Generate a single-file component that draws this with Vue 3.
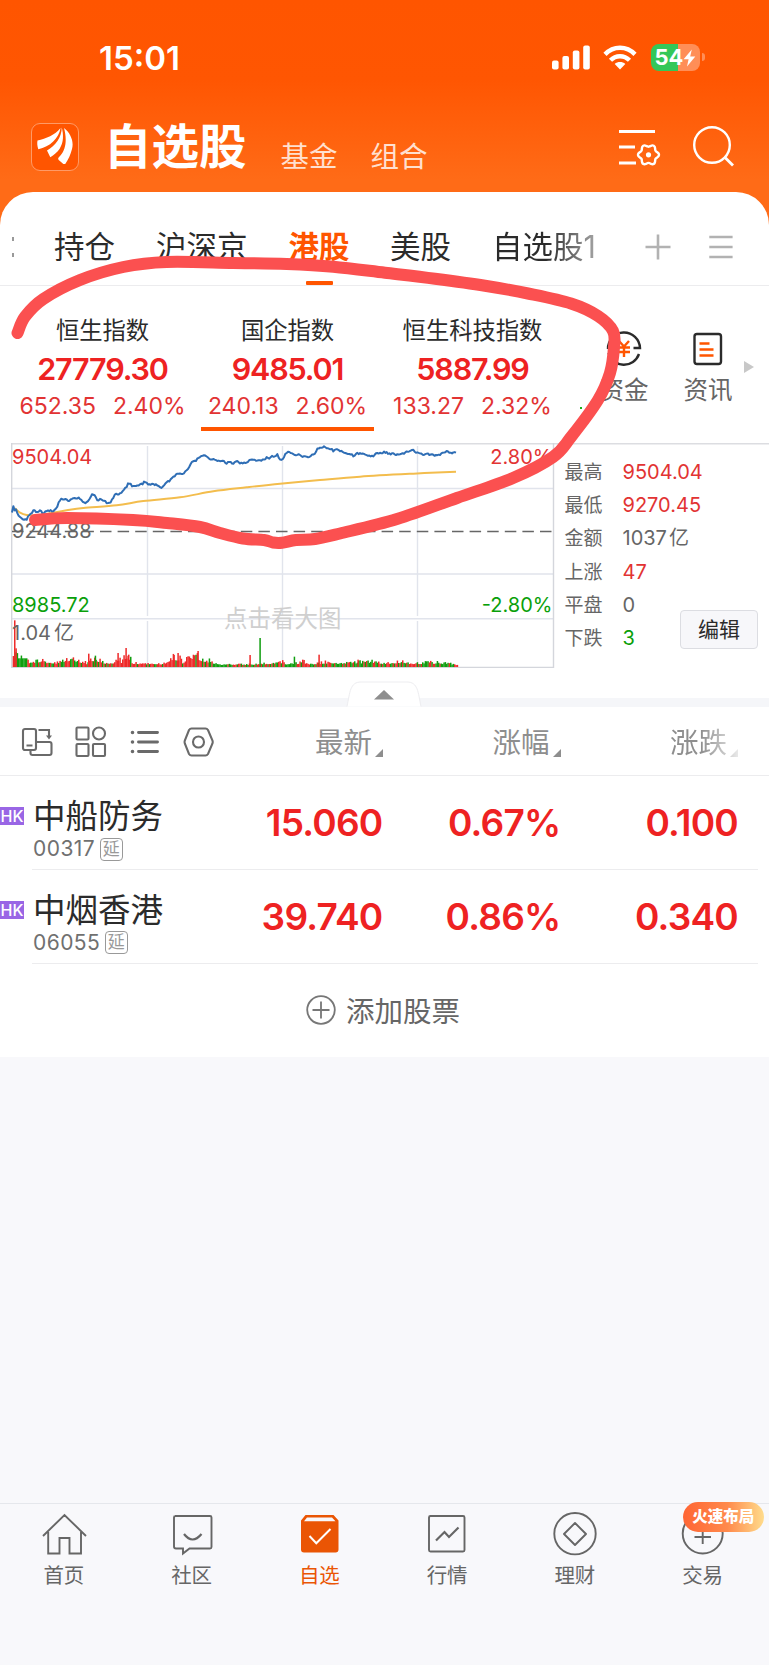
<template>
  <div class="phone">
    <!-- Status bar -->
    <div class="status-bar">
      <span class="time">15:01</span>
      <div class="status-icons">
        <svg width="38" height="25" viewBox="0 0 38 25" fill="#fff">
          <rect x="0" y="15.5" width="6.6" height="9" rx="2" />
          <rect x="10.4" y="11" width="6.6" height="13.5" rx="2" />
          <rect x="20.8" y="5.5" width="6.6" height="19" rx="2" />
          <rect x="31.2" y="0.5" width="6.6" height="24" rx="2" />
        </svg>
        <svg class="wifi" width="34" height="25" viewBox="0 0 34 25">
          <g fill="none" stroke="#fff" stroke-width="4.4">
            <path d="M2 9.4C10.500 .6 23.500 .6 32 9.400" />
            <path d="M7.500 15.300C12.800 9.800 21.200 9.800 26.500 15.300" />
          </g>
          <path d="M11.700 18.900C14.700 16.400 19.300 16.400 22.300 18.900L17 24.400Z" fill="#fff" />
        </svg>
        <div class="battery">
          <span>54</span>
          <svg width="13" height="18" viewBox="0 0 13 18">
            <path d="M8.800 .5L.6 10.200H5.600L4 17.500L12.300 7.600H7.200Z" fill="#fff" />
          </svg>
        </div>
      </div>
    </div>

    <!-- Title bar -->
    <div class="title-bar">
      <div class="logo">
        <svg width="38" height="40" viewBox="0 0 38 40" fill="#fff">
          <path d="M1.500 16.500C10 14.500 19 11 24.500 4C23 14 14 23 2.300 25.200C1.200 22 1 19 1.500 16.500Z" />
          <path d="M25.800 3.500C27.500 10.500 28 18 23.500 25C21 28.500 18 31 14.300 33.200L11 26.500C19.500 21.500 25.500 14 25.800 3.500Z" />
          <path d="M28 4C35 9.500 38 18 36 25C34.500 31 32 36.500 28.500 41L22.700 36C21.500 34.500 22.500 33.500 24 32C31 24.500 30.500 13 28 4Z" />
        </svg>
      </div>
      <span class="title">自选股</span>
      <span class="sub-title">基金</span>
      <span class="sub-title second">组合</span>
      <svg class="filter-icon" width="42" height="40" viewBox="0 0 42 40" fill="none" stroke="#fff">
        <path d="M0 4.500H36M0 20H16M0 36H17" stroke-width="2.800" />
        <path :d="gear" stroke-width="2.400" stroke-linejoin="round" />
        <circle cx="29.500" cy="27.800" r="2.600" fill="#fff" stroke="none" />
      </svg>
      <svg class="search-icon" width="42" height="42" viewBox="0 0 42 42" fill="none" stroke="#fff" stroke-width="2.400">
        <circle cx="19" cy="19" r="17.800" />
        <path d="M31.500 31L40 39.500" stroke-width="2.800" />
      </svg>
    </div>

    <main class="panel">
      <!-- Group tabs -->
      <nav class="tabs">
        <span class="cut-tab"><i></i><i></i></span>
        <span
          v-for="tab in tabs"
          :key="tab.name"
          class="tab"
          :class="[tab.cls, { active: tab.name === '港股' }]"
        >{{ tab.name }}</span>
        <svg class="plus" width="26" height="26" viewBox="0 0 26 26" stroke="#b2b2b2" stroke-width="2.600">
          <path d="M13 .5V25.500M.5 13H25.500" />
        </svg>
        <svg width="24" height="26" viewBox="0 0 24 26" stroke="#b2b2b2" stroke-width="2.600">
          <path d="M.3 3H23.600M.3 13H23.600M.3 23H23.600" />
        </svg>
      </nav>

      <!-- Index summary -->
      <section class="indices">
        <div v-for="item in indices" :key="item.name" class="index" :class="{ selected: item.selected }">
          <div class="index-name">{{ item.name }}</div>
          <div class="index-value">{{ item.value }}</div>
          <div class="index-change">
            <span>{{ item.diff }}</span>
            <span>{{ item.rate }}</span>
          </div>
        </div>
        <i class="green-dot"></i>
        <div class="shortcut money">
          <svg width="36" height="36" viewBox="0 0 36 36" fill="none" stroke="#2b2b2b" stroke-width="2.400">
            <path d="M2 18A16 16 0 1 1 34 17H27.500" />
            <path d="M33 23A16 16 0 0 1 2.500 22" />
            <path d="M13 10L18 15.500L23 10M18 15.500V26M12 16.500H24M12 21H24" stroke="#ff5500" />
          </svg>
          <span>资金</span>
        </div>
        <div class="shortcut">
          <svg width="36" height="36" viewBox="0 0 36 36" fill="none" stroke="#2b2b2b" stroke-width="2.400">
            <rect x="4.500" y="3" width="26.500" height="30" rx="2.500" />
            <path d="M9.500 12.500H19.500M9.500 18.500H23.500M9.500 24.500H23.500" stroke="#ff5500" stroke-width="2.600" />
          </svg>
          <span>资讯</span>
        </div>
        <i class="more-arrow"></i>
      </section>

      <!-- Intraday chart -->
      <section class="quote">
        <svg class="chart" width="544" height="226" viewBox="11 442 544 226">
          <g fill="none" stroke="#e1e4ec" stroke-width="1.400">
            <path d="M11 488.500H553.500M11 574H553.500M11 618.700H553.500" />
            <path d="M147.500 446V616M282.500 446V616M417.500 446V616M147.500 621V667M282.500 621V667M417.500 621V667" />
            <path d="M11.700 443V667.500H553.500V443" stroke="#d4d6dc" />
          </g>
          <text x="224" y="627" class="hint">点击看大图</text>
          <path d="M12 531.500H553" fill="none" stroke="#666" stroke-width="1.500" stroke-dasharray="11.500 6.100" />
          <rect
            v-for="bar in volumes"
            :key="bar.x"
            :x="bar.x"
            :y="667 - bar.h"
            width="1.500"
            :height="bar.h"
            :fill="bar.up ? '#ee2a2a' : '#109e10'"
          />
          <path :d="averageLine" fill="none" stroke="#f3bd4d" stroke-width="2" />
          <path :d="priceLine" fill="none" stroke="#2f6eb5" stroke-width="2" stroke-linejoin="round" />
          <text x="12" y="463.500" class="axis red">9504.04</text>
          <text x="12" y="538" class="axis">9244.88</text>
          <text x="12" y="611.700" class="axis green">8985.72</text>
          <text x="12" y="640" class="axis">1.04<tspan dx="3">亿</tspan></text>
          <text x="552.500" y="463.500" class="axis red" text-anchor="end">2.80%</text>
          <text x="552.500" y="611.700" class="axis green" text-anchor="end">-2.80%</text>
        </svg>
        <div class="stats">
          <div v-for="row in stats" :key="row.label" class="stat">
            <span class="stat-label">{{ row.label }}</span>
            <span :class="row.color">{{ row.value }}<i v-if="row.unit" class="unit">{{ row.unit }}</i></span>
          </div>
        </div>
        <button class="edit">编辑</button>
      </section>

      <div class="divider">
        <svg class="collapse" width="76" height="28" viewBox="0 0 76 28">
          <path d="M1 26.500C4 12 4 2 15 2H61C72 2 72 12 75 26.500" fill="#fff" stroke="#ededf0" />
          <path d="M28 19.500L38 10L48 19.500Z" fill="#8e8e8e" />
        </svg>
      </div>

      <!-- List header -->
      <section class="toolbar">
        <svg class="tools" width="200" height="36" viewBox="0 0 200 36" fill="none" stroke="#6a6a6a" stroke-width="2.100">
          <rect x="2" y="5" width="13" height="21" rx="2" />
          <path d="M5.500 21.500H11.500M9.500 26V29Q9.500 31 11.500 31H28.500Q30.500 31 30.500 29V20Q30.500 18 28.500 18H15M17.500 6H28V12" />
          <path d="M25 11.500H31L28 15.500Z" fill="#6a6a6a" stroke="none" />
          <rect x="55.500" y="3.500" width="12" height="12" rx="1" />
          <circle cx="78" cy="9.500" r="6" />
          <rect x="55.500" y="20" width="12" height="12" rx="1" />
          <rect x="72" y="20" width="12" height="12" rx="1" />
          <path d="M117.500 8.500H136.500M117.500 18H136.500M117.500 27.500H136.500" stroke-width="2.900" stroke-linecap="round" />
          <path d="M111.500 8.500h.01M111.500 18h.01M111.500 27.500h.01" stroke-width="3.600" stroke-linecap="round" />
          <path d="M170.500 4.500H184.500Q186 4.500 187 6L191.500 16.500Q192 18 191.500 19.500L187 30Q186 31.500 184.500 31.500H170.500Q169 31.500 168 30L163.800 19.500Q163.300 18 163.800 16.500L168 6Q169 4.500 170.500 4.500Z" />
          <circle cx="177.500" cy="18" r="5.500" />
        </svg>
        <div class="col">最新<i></i></div>
        <div class="col rate">涨幅<i></i></div>
        <div class="col diff">涨跌<i></i></div>
      </section>

      <!-- Stocks -->
      <section v-for="stock in stocks" :key="stock.code" class="stock">
        <span class="market">HK</span>
        <div class="stock-body">
          <div class="stock-id">
            <div class="stock-name">{{ stock.name }}</div>
            <div class="stock-code">{{ stock.code }}<span class="delay">延</span></div>
          </div>
          <div class="num price">{{ stock.price }}</div>
          <div class="num pct">{{ stock.rate }}</div>
          <div class="num change">{{ stock.diff }}</div>
        </div>
      </section>

      <div class="add">
        <svg width="30" height="30" viewBox="0 0 30 30" fill="none" stroke="#777" stroke-width="1.800">
          <circle cx="15" cy="15" r="13.800" />
          <path d="M15 6.500V23.500M6.500 15H23.500" />
        </svg>
        <span>添加股票</span>
      </div>
    </main>

    <!-- Bottom navigation -->
    <footer class="bottom-nav">
      <div class="nav-item">
        <svg width="46" height="46" viewBox="0 0 46 46">
          <path d="M2 23L23.500 2L45 23M7.200 19V40.500H18.500V25H28.500V40.500H40V19" />
        </svg>
        <span>首页</span>
      </div>
      <div class="nav-item">
        <svg width="46" height="46" viewBox="0 0 46 46">
          <path d="M6 3H41Q42.500 3 42.500 4.500V34Q42.500 35.500 41 35.500H20.500L14 40.500V35.500H7Q5 35.500 5 33.500V4.500Q5 3 6.500 3Z" />
          <path d="M15 21Q23.500 32 32.500 21" stroke-width="2.200" />
        </svg>
        <span>社区</span>
      </div>
      <div class="nav-item current">
        <svg width="46" height="46" viewBox="0 0 46 46">
          <path class="solid" fill-rule="evenodd" d="M9.500 2H37.500L42.500 7.500V36.500Q42.500 39.500 39.500 39.500H8Q5 39.500 5 36.500V7.500ZM11 4.500L8 8.300H39.500L36 4.500Z" />
          <path class="check" d="M13.500 23L20.300 30.200L34.500 16" />
        </svg>
        <span>自选</span>
      </div>
      <div class="nav-item">
        <svg width="46" height="46" viewBox="0 0 46 46">
          <rect x="5" y="3" width="35.500" height="35.500" rx="1.500" />
          <path d="M12 27.500L20.500 19L25 24L34.500 14.500" stroke-width="2.200" />
        </svg>
        <span>行情</span>
      </div>
      <div class="nav-item">
        <svg width="46" height="46" viewBox="0 0 46 46">
          <circle cx="23" cy="20.700" r="20.700" />
          <path d="M23 10L34 21L23 32L12 21Z" stroke-linejoin="round" />
        </svg>
        <span>理财</span>
      </div>
      <div class="nav-item">
        <svg width="46" height="46" viewBox="0 0 46 46">
          <circle cx="22.700" cy="20.500" r="20" />
          <path d="M22.700 12V31M14.500 24H31" />
        </svg>
        <span>交易</span>
        <b class="promo">火速布局</b>
      </div>
    </footer>

    <!-- Hand drawn marker over the index area -->
    <svg class="marker" width="769" height="600" viewBox="0 0 769 600">
      <path :d="markerLine" />
    </svg>
  </div>
</template>

<script setup>
const tabs = [
  { name: '持仓', cls: 'hold' },
  { name: '沪深京', cls: 'cn' },
  { name: '港股', cls: 'hk' },
  { name: '美股', cls: 'us' },
  { name: '自选股1', cls: 'faded' },
]

const indices = [
  { name: '恒生指数', value: '27779.30', diff: '652.35', rate: '2.40%' },
  { name: '国企指数', value: '9485.01', diff: '240.13', rate: '2.60%', selected: true },
  { name: '恒生科技指数', value: '5887.99', diff: '133.27', rate: '2.32%' },
]

const stats = [
  { label: '最高', value: '9504.04', color: 'red' },
  { label: '最低', value: '9270.45', color: 'red' },
  { label: '金额', value: '1037', unit: '亿', color: 'grey' },
  { label: '上涨', value: '47', color: 'red' },
  { label: '平盘', value: '0', color: 'grey' },
  { label: '下跌', value: '3', color: 'green' },
]

const stocks = [
  { name: '中船防务', code: '00317', price: '15.060', rate: '0.67%', diff: '0.100' },
  { name: '中烟香港', code: '06055', price: '39.740', rate: '0.86%', diff: '0.340' },
]

// Smooth curve through a list of points
const smooth = (pts) => {
  let d = `M${pts[0][0]} ${pts[0][1]}`
  for (let i = 0; i < pts.length - 1; i++) {
    const p0 = pts[i - 1] || pts[i]
    const p1 = pts[i]
    const p2 = pts[i + 1]
    const p3 = pts[i + 2] || p2
    d += `C${p1[0] + (p2[0] - p0[0]) / 6} ${p1[1] + (p2[1] - p0[1]) / 6} ${p2[0] - (p3[0] - p1[0]) / 6} ${p2[1] - (p3[1] - p1[1]) / 6} ${p2[0]} ${p2[1]}`
  }
  return d
}

// Chart data is sampled at three units per pixel
const toPage = ([x, y]) => [x / 3, 430 + y / 3]

const noise = (i) => {
  const v = Math.sin(i * 12.9898) * 43758.5453
  return v - Math.floor(v)
}

const prices = [
  [36, 245], [40, 228], [44, 240], [50, 240], [54, 255], [62, 265], [72, 271], [80, 268], [86, 258],
  [100, 242], [106, 240], [110, 250], [120, 242], [128, 250], [140, 244], [165, 241], [172, 228],
  [180, 209], [200, 208], [206, 212], [215, 204], [238, 204], [248, 215], [258, 218], [265, 210],
  [270, 205], [276, 193], [285, 197], [290, 209], [305, 208], [322, 219], [332, 216], [345, 193],
  [362, 190], [370, 178], [378, 172], [386, 159], [392, 163], [398, 171], [410, 165], [425, 163],
  [434, 155], [445, 163], [470, 163], [482, 172], [490, 170], [496, 158], [508, 152], [520, 140],
  [535, 132], [550, 130], [560, 118], [568, 112], [575, 96], [588, 92], [596, 82], [606, 78],
  [613, 73], [620, 82], [635, 87], [655, 92], [670, 92], [675, 100], [690, 96], [700, 99], [708, 92],
  [722, 100], [740, 96], [750, 90], [770, 92], [785, 93], [800, 84], [808, 86], [818, 77], [826, 80],
  [832, 74], [842, 91], [848, 88], [856, 72], [866, 65], [876, 70], [885, 78], [896, 74], [905, 79],
  [915, 76], [925, 83], [935, 76], [945, 70], [952, 55], [962, 51], [975, 51], [985, 56], [995, 55],
  [1000, 62], [1010, 59], [1030, 66], [1042, 72], [1055, 72], [1062, 79], [1070, 68], [1085, 72],
  [1105, 76], [1120, 77], [1130, 70], [1155, 67], [1175, 72], [1200, 74], [1215, 68], [1240, 60],
  [1245, 68], [1265, 73], [1280, 71], [1310, 77], [1325, 72], [1335, 64], [1350, 68], [1368, 68],
]

const at = (list, x) => {
  const i = Math.max(1, list.findIndex((p) => p[0] >= x))
  const [x0, y0] = list[i - 1]
  const [x1, y1] = list[i]
  return y0 + ((y1 - y0) * (x - x0)) / (x1 - x0)
}

const ticks = []
for (let x = 36; x <= 1368; x += 4) ticks.push([x, at(prices, x) + (noise(x) - 0.5) * 5.5])
const priceLine = 'M' + ticks.map((p) => toPage(p).join(' ')).join('L')

const averageLine = smooth([
  [45, 235], [60, 248], [80, 255], [110, 256], [150, 250], [200, 241], [250, 234], [350, 226],
  [430, 213], [540, 202], [640, 184], [740, 172], [840, 161], [960, 150], [1080, 140], [1240, 131],
  [1368, 125],
].map(toPage))

const envelope = [
  [36, 55], [48, 52], [52, 38], [80, 34], [84, 20], [130, 26], [145, 14], [170, 16], [185, 30],
  [215, 30], [240, 24], [258, 14], [265, 38], [290, 33], [310, 14], [345, 20], [352, 42], [362, 22],
  [376, 56], [388, 34], [396, 14], [490, 12], [500, 28], [520, 40], [535, 40], [545, 18], [565, 45],
  [592, 48], [604, 26], [625, 26], [640, 16], [660, 8], [740, 8], [800, 14], [830, 18], [845, 20],
  [860, 8], [895, 16], [905, 24], [920, 10], [990, 20], [1020, 14], [1045, 22], [1070, 18],
  [1110, 24], [1150, 14], [1200, 22], [1240, 12], [1280, 18], [1340, 14], [1374, 5],
]
const peaks = [
  [42, 140, true], [46, 56, true], [264, 40, true], [284, 34, false], [352, 42, true], [376, 57, true],
  [384, 37, true], [520, 36, true], [532, 42, true], [592, 48, true], [748, 36, true], [778, 87, false],
  [881, 31, false], [906, 22, true], [955, 37, true], [1072, 22, true],
]

const volumes = []
for (let x = 38; x < 1374; x += 4) {
  const n = noise(x * 3)
  const h = at(envelope, x) * (0.42 + 0.55 * n * n) + 2.5
  const greenStart = x > 48 && x < 82
  const redZone = (x > 345 && x < 390) || (x > 490 && x < 605)
  const up = !greenStart && noise(x * 7) < (redZone ? 0.9 : x > 640 ? 0.45 : 0.62)
  volumes.push({ x: x / 3, h: (greenStart ? Math.max(h, 26) : h) / 3, up })
}
peaks.forEach(([x, h, up]) => volumes.push({ x: x / 3 + 0.01, h: h / 3, up }))

const markerLine = smooth([
  [17.5, 333], [25, 316.7], [43.3, 299], [80, 280], [123.3, 267], [166.7, 262], [233.3, 263],
  [286.7, 264], [333.3, 266.7], [385, 272.7], [435, 278.7], [485, 285.7], [528, 293.5], [571, 303.5],
  [598, 316], [613, 331], [614, 347], [610, 373], [598, 400], [571, 437], [553, 457], [513, 478],
  [457, 498], [397, 519], [340, 533.5], [315, 539], [296, 540], [282, 542.7], [273, 542.5],
  [264, 540], [243, 538.5], [220, 533], [200, 527], [167, 523], [133, 520], [67, 518], [35, 520],
])

// Small settings cog in the title bar
const gearPoints = []
for (let i = 0; i <= 48; i++) {
  const a = (i / 48) * Math.PI * 2
  const r = 9.3 + 1.2 * Math.cos(a * 6)
  gearPoints.push([29.5 + r * Math.cos(a), 27.8 + r * Math.sin(a)])
}
const gear = smooth(gearPoints) + 'Z'
</script>

<style>
body {
  background: #f8f8fb;
}
</style>

<style scoped>
.phone {
  position: relative;
  width: 769px;
  height: 1665px;
  overflow: hidden;
  display: flex;
  flex-direction: column;
  background: linear-gradient(#ff5500 0, #ff5602 80px, #ff6b17 180px, #ff6b17 260px, #f8f8fb 260px);
  font-family: Inter, "Noto Sans CJK SC", sans-serif;
  color: #2b2b2b;
}

svg {
  display: block;
  flex: none;
}

.phone span,
.phone div {
  white-space: nowrap;
}

.red {
  color: #e23333;
  fill: #e23333;
}

.green {
  color: #0a9f0a;
  fill: #0a9f0a;
}

.grey {
  color: #666;
}

/* Status bar */
.status-bar {
  height: 115px;
  box-sizing: border-box;
  padding: 0 64px 0 99px;
  display: flex;
  align-items: center;
  justify-content: space-between;
  color: #fff;
}

.time {
  font-size: 33px;
  font-weight: 600;
  line-height: 40px;
}

.status-icons {
  display: flex;
  align-items: center;
}

.wifi {
  margin: 0 14px 0 13.500px;
}

.battery {
  position: relative;
  width: 49px;
  height: 27px;
  border-radius: 8px;
  display: flex;
  align-items: center;
  justify-content: center;
  background: linear-gradient(90deg, #34c759 55%, #ff8e57 55%);
  font-size: 22px;
  font-weight: 700;
  line-height: 27px;
  margin-right: 5px;
}

.battery::after {
  content: "";
  position: absolute;
  right: -5px;
  top: 9px;
  width: 3px;
  height: 8px;
  border-radius: 0 3px 3px 0;
  background: #ff8e57;
}

/* Title bar */
.title-bar {
  height: 77px;
  display: flex;
  align-items: flex-start;
  color: #fff;
}

.logo {
  width: 48px;
  height: 48px;
  box-sizing: border-box;
  margin: 8px 0 0 31px;
  border: 1px solid #ff9a66;
  border-radius: 9px;
  background: #ff5500;
  display: flex;
  justify-content: center;
  overflow: hidden;
}

.title {
  margin: 2px 0 0 25px;
  font-size: 47.500px;
  font-weight: 700;
  line-height: 60px;
}

.sub-title {
  margin: 21.500px 0 0 34px;
  font-size: 28.500px;
  line-height: 40px;
  color: #ffe0d0;
}

.sub-title.second {
  margin-left: 33px;
}

.filter-icon {
  margin: 11.500px 0 0 auto;
}

.search-icon {
  margin: 11px 34px 0 32px;
}

/* Panel */
.panel {
  background: #fff;
  border-radius: 33px 33px 0 0;
  height: 865px;
  flex: none;
}

.tabs {
  height: 94px;
  box-sizing: border-box;
  padding-top: 17px;
  border-bottom: 1.500px solid #ececee;
  display: flex;
  align-items: center;
}

.cut-tab {
  width: 2px;
  height: 20px;
  margin-left: 11.500px;
  display: flex;
  flex-direction: column;
  justify-content: space-between;
}

.cut-tab i {
  height: 4px;
  background: #999;
}

.tab {
  position: relative;
  font-size: 30.500px;
  line-height: 76px;
}

.hold {
  margin-left: 40.500px;
}

.cn {
  margin-left: 41px;
}

.hk {
  margin-left: 41px;
}

.us {
  margin-left: 40.500px;
}

.faded {
  margin-left: 41px;
  width: 106px;
  background: linear-gradient(90deg, #2b2b2b 52%, #aaa 100%);
  background-clip: text;
  color: transparent;
}

.active {
  color: #ff5500;
  font-weight: 600;
}

.active::after {
  content: "";
  position: absolute;
  left: 17px;
  bottom: 0;
  width: 27px;
  height: 4px;
  border-radius: 1px;
  background: #ff5500;
}

.plus {
  margin: 0 38px 0 auto;
}

.tabs svg:last-child {
  margin-right: 36px;
}

/* Index summary */
.indices {
  height: 156px;
  padding-left: 10px;
  display: flex;
}

.index {
  width: 185px;
  text-align: center;
  padding-top: 32px;
}

.index-name {
  font-size: 23.300px;
  line-height: 26px;
}

.index-value {
  margin-top: 7.500px;
  font-size: 30.500px;
  font-weight: 600;
  line-height: 34px;
  letter-spacing: -1.150px;
  color: #ee2222;
}

.index-change {
  margin-top: 6.500px;
  display: flex;
  justify-content: center;
  gap: 17px;
  font-size: 23px;
  line-height: 28px;
  color: #e23333;
}

.selected::after {
  content: "";
  display: block;
  width: 173px;
  height: 3.500px;
  margin: 7px auto 0;
  background: #ff5500;
}

.green-dot {
  width: 2px;
  height: 2px;
  margin: 121px 0 0 15px;
  background: #1fae1f;
}

.shortcut {
  width: 50px;
  padding-top: 45px;
  display: flex;
  flex-direction: column;
  align-items: center;
  font-size: 24.500px;
  line-height: 30px;
  color: #666;
}

.shortcut span {
  margin-top: 8px;
}

.shortcut.money {
  margin: 0 34px 0 17px;
}

.more-arrow {
  margin: 75px 0 0 11px;
  height: 0;
  border: 6px solid transparent;
  border-left: 10px solid #c8c8c8;
  border-right: 0;
}

/* Chart */
.quote {
  height: 256px;
  display: flex;
  position: relative;
  background: linear-gradient(#dcdde1, #dcdde1) 11px 1px / 100% 1.500px no-repeat;
}

.chart {
  margin-left: 11px;
}

.axis {
  font-size: 20px;
}

.axis:not(.red):not(.green) {
  fill: #666;
}

.hint {
  font-size: 23.500px;
  fill: #cfcfcf;
}

.stats {
  margin: 14px 0 0 9.500px;
}

.stat {
  display: flex;
  height: 33.200px;
  line-height: 33.200px;
  font-size: 20px;
}

.stat-label {
  width: 58px;
  font-size: 19px;
  color: #666;
}

.unit {
  margin-left: 2px;
  font-style: normal;
}

.edit {
  position: absolute;
  left: 680px;
  top: 168px;
  width: 78px;
  height: 39px;
  padding: 0;
  border: 1px solid #dcdde2;
  border-radius: 4px;
  background: #f7f7fa;
  font: 21px/36px Inter, "Noto Sans CJK SC", sans-serif;
  color: #2b2b2b;
}

.divider {
  position: relative;
  height: 9px;
  background: #f5f6f9;
}

.collapse {
  position: absolute;
  left: 346px;
  top: -18px;
}

/* List header */
.toolbar {
  height: 69px;
  box-sizing: border-box;
  padding-top: 2px;
  border-bottom: 1.500px solid #ececee;
  display: flex;
  align-items: center;
}

.tools {
  margin-left: 20.500px;
}

.col {
  display: flex;
  align-items: flex-end;
  margin: 1px 0 0 94.500px;
  font-size: 28.500px;
  line-height: 40px;
  color: #8e8e8e;
}

.col i {
  margin: 0 0 6px 3px;
  border: 4px solid #8e8e8e;
  border-left-color: transparent;
  border-top-color: transparent;
}

.rate {
  margin-left: 109.500px;
}

.diff {
  margin-left: 109.500px;
  -webkit-mask-image: linear-gradient(90deg, #000 45%, rgba(0, 0, 0, 0.2) 100%);
  mask-image: linear-gradient(90deg, #000 45%, rgba(0, 0, 0, 0.2) 100%);
}

/* Stocks */
.stock {
  height: 93.800px;
  display: flex;
}

.market {
  width: 24px;
  height: 18px;
  margin-top: 31px;
  background: #9966e5;
  color: #fff;
  font-size: 16px;
  font-weight: 500;
  line-height: 18px;
  text-align: center;
}

.stock-body {
  width: 726px;
  margin-left: 8px;
  box-sizing: border-box;
  border-bottom: 1.500px solid #ececee;
  display: flex;
}

.stock-id {
  width: 180px;
  padding: 21px 0 0 1px;
}

.stock-name {
  font-size: 32.500px;
  line-height: 40px;
}

.stock-code {
  display: flex;
  align-items: center;
  line-height: 24px;
  font-size: 21px;
  letter-spacing: 0.450px;
  color: #707070;
}

.delay {
  width: 21px;
  height: 21px;
  margin-left: 4.500px;
  border: 1.500px solid #999;
  border-radius: 4px;
  font-size: 17px;
  line-height: 20px;
  letter-spacing: 0;
  text-align: center;
  color: #999;
}

.num {
  font-size: 37px;
  font-weight: 600;
  line-height: 94px;
  letter-spacing: -0.750px;
  text-align: right;
  color: #ee2222;
}

.price {
  width: 169.500px;
}

.pct {
  width: 178px;
}

.change {
  width: 177.500px;
}

.add {
  height: 92px;
  padding-left: 306px;
  display: flex;
  align-items: center;
  gap: 10px;
  font-size: 28.500px;
  color: #666;
}

/* Bottom navigation */
.bottom-nav {
  height: 162px;
  box-sizing: border-box;
  margin-top: auto;
  padding-right: 2.500px;
  border-top: 1.500px solid #e5e7ec;
  background: #f8f8fb;
  display: flex;
}

.nav-item {
  position: relative;
  flex: 1;
  display: flex;
  flex-direction: column;
  align-items: center;
  padding-top: 9px;
  font-size: 20.500px;
  line-height: 28px;
  color: #666;
}

.nav-item svg {
  fill: none;
  stroke: #666;
  stroke-width: 1.900;
  overflow: visible;
}

.nav-item span {
  margin-top: 3px;
}

.nav-item.current {
  color: #ea5504;
}

.nav-item .solid {
  fill: #ea5504;
  stroke: none;
}

.nav-item .check {
  stroke: #fff;
  stroke-width: 2;
}

.promo {
  position: absolute;
  left: 44px;
  top: -2px;
  width: 81px;
  height: 30px;
  border-radius: 15px;
  background: linear-gradient(90deg, #ff6534, #ff8a4c 55%, #ffdc8c);
  color: #fff;
  font-size: 15.500px;
  font-weight: 900;
  line-height: 30px;
  text-align: center;
}

.marker {
  position: absolute;
  left: 0;
  top: 0;
  pointer-events: none;
}

.marker path {
  fill: none;
  stroke: #fb5050;
  stroke-width: 12;
  stroke-linecap: round;
  stroke-linejoin: round;
}
</style>
